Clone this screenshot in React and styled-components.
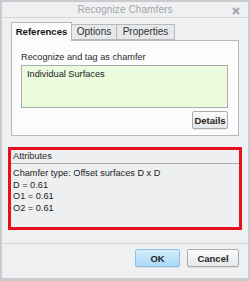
import styled, { createGlobalStyle } from "styled-components";

const Global = createGlobalStyle`
  html, body { margin: 0; padding: 0; background: #ffffff; }
  * { box-sizing: border-box; }
`;

const Window = styled.div`
  width: 250px;
  height: 281px;
  border: 2px solid #c9cbce;
  border-bottom-width: 3px;
  background: #eef0f2;
  display: flex;
  flex-direction: column;
  font-family: "Liberation Sans", Arial, sans-serif;
  font-size: 9.2px;
  color: #1e1e1e;
`;

const TitleBar = styled.div`
  height: 16px;
  border-bottom: 1px solid #d6d8db;
  display: flex;
  align-items: center;
  justify-content: center;
  position: relative;
  color: #a3a5a8;
  font-size: 10px;
  letter-spacing: 0.1px;
`;

const Close = styled.svg`
  position: absolute;
  right: 8px;
  top: 5px;
`;

const Body = styled.div`
  padding: 4px 9px 0 9px;
  display: flex;
  flex-direction: column;
`;

const TabRow = styled.div`
  display: flex;
  align-items: flex-end;
  height: 18px;
  position: relative;
  z-index: 1;
`;

const Tab = styled.div`
  height: ${(p) => (p.$active ? "19px" : "16px")};
  width: ${(p) => p.$w}px;
  display: flex;
  align-items: center;
  justify-content: center;
  border: 1px solid #b7b9bc;
  border-bottom: ${(p) => (p.$active ? "none" : "1px solid #b7b9bc")};
  border-left: ${(p) => (p.$first ? "1px solid #b7b9bc" : "none")};
  background: ${(p) => (p.$active ? "#fcfcfc" : "#e6e8ea")};
  font-weight: ${(p) => (p.$active ? "bold" : "normal")};
  font-size: ${(p) => (p.$active ? "9.6px" : "10px")};
  color: ${(p) => (p.$active ? "#151515" : "#333333")};
  margin-bottom: ${(p) => (p.$active ? "-1px" : "0")};
  padding-bottom: 1px;
`;

const Panel = styled.div`
  height: 96px;
  background: #fcfcfc;
  border: 1px solid #b7b9bc;
  padding: 10px 10px 0 9px;
  display: flex;
  flex-direction: column;
`;

const Label = styled.div`
  height: 12px;
  line-height: 12px;
  color: #2a2a2a;
`;

const ListBox = styled.div`
  margin-top: 2px;
  height: 43px;
  background: #ebfbde;
  border: 1px solid #a9abad;
  padding: 3px 5px;
  line-height: 11px;
  color: #1a1a1a;
`;

const Actions = styled.div`
  display: flex;
  justify-content: flex-end;
  gap: ${(p) => p.$gap || 0}px;
  margin-top: ${(p) => p.$top || 0}px;
`;

const Button = styled.div`
  width: ${(p) => p.$w}px;
  height: 18px;
  display: flex;
  align-items: center;
  justify-content: center;
  border-radius: 2px;
  font-weight: bold;
  font-size: 9.5px;
  color: #262626;
  border: 1px solid ${(p) => (p.$primary ? "#8fc0e4" : "#a9abad")};
  background: ${(p) =>
    p.$primary
      ? "linear-gradient(#d3ecfc, #a9d8f8)"
      : "linear-gradient(#fbfbfb, #e6e7e9)"};
  box-shadow: 0 1px 0 rgba(0, 0, 0, 0.08);
`;

const Highlight = styled.div`
  margin: 11px -3px 0 -3px;
  height: 83px;
  border: 3px solid #e8101c;
  background: #eeeff0;
  display: flex;
  flex-direction: column;
`;

const GroupHead = styled.div`
  height: 14px;
  line-height: 13px;
  padding-left: 2px;
  border-bottom: 1px solid #a9abad;
  color: #2a2a2a;
`;

const GroupBody = styled.div`
  padding: 4px 0 0 2px;
  line-height: 11.7px;
  color: #232323;
`;

const Footer = styled.div`
  margin-top: auto;
  border-top: 1px solid #d3d5d8;
  height: 35px;
  padding: 5px 9px 0 0;
`;

const rows = [
  "Chamfer type: Offset surfaces D x D",
  "D = 0.61",
  "O1 = 0.61",
  "O2 = 0.61",
];

export default function App() {
  return (
    <>
      <Global />
      <Window>
        <TitleBar>
          Recognize Chamfers
          <Close width="8" height="8" viewBox="0 0 8 8">
            <path d="M1 1 L7 7 M7 1 L1 7" stroke="#a6a8ab" strokeWidth="2" />
          </Close>
        </TitleBar>
        <Body>
          <TabRow>
            <Tab $active $first $w={61}>References</Tab>
            <Tab $w={45}>Options</Tab>
            <Tab $w={58}>Properties</Tab>
          </TabRow>
          <Panel>
            <Label>Recognize and tag as chamfer</Label>
            <ListBox>Individual Surfaces</ListBox>
            <Actions $top={3}>
              <Button $w={36}>Details</Button>
            </Actions>
          </Panel>
          <Highlight>
            <GroupHead>Attributes</GroupHead>
            <GroupBody>
              {rows.map((r) => (
                <div key={r}>{r}</div>
              ))}
            </GroupBody>
          </Highlight>
        </Body>
        <Footer>
          <Actions $gap={7}>
            <Button $primary $w={45}>OK</Button>
            <Button $w={52}>Cancel</Button>
          </Actions>
        </Footer>
      </Window>
    </>
  );
}
